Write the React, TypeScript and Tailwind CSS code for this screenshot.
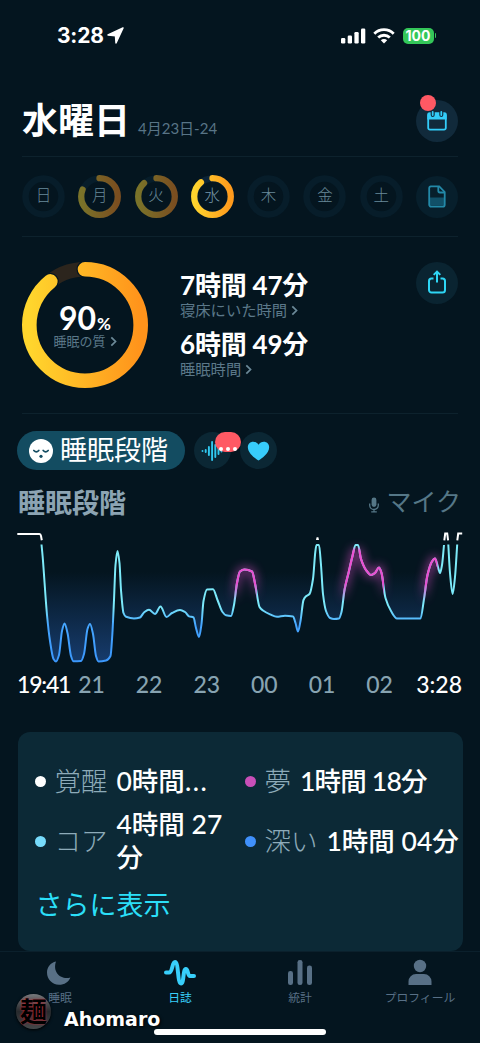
import type { ReactNode } from 'react';
import clsx from 'clsx';

type Point = [number, number];

const DAYS: { label: string; score: number; active?: boolean }[] = [
  { label: '日', score: 0 },
  { label: '月', score: 0.82 },
  { label: '火', score: 0.89 },
  { label: '水', score: 0.9, active: true },
  { label: '木', score: 0 },
  { label: '金', score: 0 },
  { label: '土', score: 0 },
];

const HOURS = ['21', '22', '23', '00', '01', '02'];

const CURVE: Point[] = [
  [41.5, 544.5], [42.6, 556], [47, 615], [50, 641], [53.5, 659], [56, 661.5], [59, 655], [62, 631], [64.5, 623.5],
  [67.5, 633], [71, 656], [73.5, 661.3], [81, 661], [84, 654], [87.5, 629], [90, 624], [93, 634], [96, 656],
  [98.5, 661.5], [106, 660.5], [110.5, 656], [112.3, 635], [114, 600], [115.5, 565], [117.5, 551], [119.5, 563],
  [121, 590], [123.5, 613], [126, 616.8], [134, 618.5], [140, 617.5], [144, 612.5], [149, 609.8], [155, 614],
  [160.5, 606.5], [166.5, 617], [172, 613], [180, 610], [185, 612], [189, 616.3], [193.5, 617.5], [196, 628],
  [199, 637], [201.5, 624], [203.5, 601], [207, 589.5], [213, 589.2], [217.5, 600], [222.5, 612], [226, 615.3],
  [231, 616], [234, 605], [237, 583], [240, 571.5], [244.5, 569.5], [252, 571.5], [255.5, 586], [259.5, 607],
  [263, 610.5], [270, 614.3], [277, 616.8], [285, 615.7], [293, 616.5], [295.5, 623], [298, 631.5], [300.5, 621],
  [303.5, 600], [306, 596.3], [309.5, 594], [313, 579], [315.3, 552], [316.5, 545], [319, 545], [321, 565],
  [323, 594], [326, 611], [330, 618], [334, 619], [339, 618.5], [341.5, 612], [344.5, 590], [348.5, 573],
  [352.5, 556], [355.5, 545], [358, 545], [361, 559], [366, 570], [371, 575], [375, 573], [379, 567.5],
  [381.5, 573], [385.5, 598], [391, 611], [397, 618.5], [420.5, 618.5], [424, 599], [427.5, 575], [432, 561.5],
  [435, 558.5], [438, 567], [440, 573], [442, 565], [444, 545],
];

const TAIL: Point[] = [[448.3, 544.5], [450, 573], [452.6, 594], [455, 577], [457.2, 544.5]];

// Monotone cubic interpolation, keeps the peaks from overshooting
const smooth = (pts: Point[]) => {
  const slopes = pts.slice(1).map((p, i) => (p[1] - pts[i][1]) / (p[0] - pts[i][0]));
  const tangents = pts.map((_, i) => {
    if (i === 0) return slopes[0];
    if (i === pts.length - 1) return slopes[i - 1];
    const a = slopes[i - 1];
    const b = slopes[i];
    return a * b <= 0 ? 0 : (2 * a * b) / (a + b);
  });
  return pts.slice(1).reduce((d, [x, y], i) => {
    const [px, py] = pts[i];
    const h = (x - px) / 3;
    return `${d} C${px + h} ${py + tangents[i] * h} ${x - h} ${y - tangents[i + 1] * h} ${x} ${y}`;
  }, `M${pts[0][0]} ${pts[0][1]}`);
};

const DayRing = ({ label, score, active }: { label: string; score: number; active?: boolean }) => {
  const length = 2 * Math.PI * 18;
  return (
    <div className="relative flex h-[43px] w-[43px] items-center justify-center">
      <svg viewBox="0 0 43 43" className="absolute inset-0">
        <defs>
          <linearGradient id={`day-${label}`} x1="0" y1="0" x2="0" y2="1">
            <stop offset="0" stopColor={active ? '#ffd52e' : '#7a7329'} />
            <stop offset="1" stopColor={active ? '#ff9a1c' : '#7a4e20'} />
          </linearGradient>
        </defs>
        <circle cx="21.5" cy="21.5" r="18" fill="none" stroke={active ? '#0b2438' : '#071d2a'} strokeWidth="6.5" />
        {score > 0 && (
          <circle
            cx="21.5"
            cy="21.5"
            r="18.3"
            fill="none"
            stroke={`url(#day-${label})`}
            strokeWidth="6.3"
            strokeLinecap="round"
            strokeDasharray={`${length * score} 200`}
            transform="rotate(-90 21.5 21.5)"
          />
        )}
      </svg>
      <span className={clsx('relative -top-px text-[15.5px] leading-none font-light', active ? 'text-[#7698aa]' : 'text-[#6a8a9a]')}>
        {label}
      </span>
    </div>
  );
};

const Chevron = ({ className }: { className?: string }) => (
  <svg viewBox="0 0 8 12" fill="none" stroke="#6b8998" strokeWidth="2" className={clsx('h-[11px] w-[7px]', className)}>
    <path d="M1.5 1.2 6.3 6l-4.8 4.8" />
  </svg>
);

const Duration = ({ value, label }: { value: string; label: string }) => (
  <div className="h-[59px]">
    <p className="text-[26px] leading-[30px] font-bold tracking-[-0.2px] whitespace-nowrap text-white">{value}</p>
    <p className="flex items-center text-[15.3px] leading-5 text-[#5b7889]">
      {label}
      <Chevron className="ml-1" />
    </p>
  </div>
);

const QualityRing = () => (
  <div className="relative h-[126px] w-[126px]">
    <svg viewBox="0 0 126 126" className="absolute inset-0">
      <defs>
        <linearGradient id="quality" x1="0" y1="0" x2="0" y2="1">
          <stop offset="0" stopColor="#ffd62d" />
          <stop offset="1" stopColor="#ff931b" />
        </linearGradient>
      </defs>
      <circle cx="63" cy="63" r="55.7" fill="none" stroke="#2c251d" strokeWidth="14.6" />
      <g fill="none" strokeLinecap="round" transform="rotate(-90 63 63)">
        <circle cx="63" cy="63" r="55.7" stroke="#04151f" strokeWidth="17" strokeDasharray="312 400" />
        <circle cx="63" cy="63" r="55.7" stroke="url(#quality)" strokeWidth="14.6" strokeDasharray="312 400" />
      </g>
    </svg>
    <div className="relative flex h-full flex-col items-center pt-[41px]">
      <p className="flex items-baseline font-bold text-white">
        <span className="text-[32px] leading-[30px]">90</span>
        <span className="ml-px text-[17px] leading-none">%</span>
      </p>
      <p className="flex items-center text-[13px] leading-4 text-[#5b7889]">
        睡眠の質
        <Chevron className="ml-1" />
      </p>
    </div>
  </div>
);

const SleepChart = () => {
  const line = smooth(CURVE);
  const tail = smooth(TAIL);
  return (
    <svg viewBox="0 522 480 146" className="block h-[146px] w-[480px] shrink-0" fill="none">
      <defs>
        <linearGradient id="depth" gradientUnits="userSpaceOnUse" x1="0" y1="545" x2="0" y2="662">
          <stop offset="0" stopColor="#7deaf8" />
          <stop offset="0.53" stopColor="#7be9fa" />
          <stop offset="0.68" stopColor="#45a5ff" />
          <stop offset="1" stopColor="#3b97fb" />
        </linearGradient>
        <linearGradient id="dream" gradientUnits="userSpaceOnUse" x1="0" y1="545" x2="0" y2="602">
          <stop offset="0.03" stopColor="#f04fd2" stopOpacity="0" />
          <stop offset="0.1" stopColor="#f04fd2" />
          <stop offset="0.68" stopColor="#e84fd0" />
          <stop offset="1" stopColor="#e84fd0" stopOpacity="0" />
        </linearGradient>
        <linearGradient id="haze" gradientUnits="userSpaceOnUse" x1="0" y1="572" x2="0" y2="662">
          <stop offset="0" stopColor="#1b4580" stopOpacity="0" />
          <stop offset="1" stopColor="#1b4580" stopOpacity="0.8" />
        </linearGradient>
        <filter id="glow" filterUnits="userSpaceOnUse" x="0" y="522" width="480" height="146">
          <feGaussianBlur stdDeviation="5" />
        </filter>
        <clipPath id="dreaming">
          <path d="M228 522h29v146h-29zM341 522h43v146h-43zM422 522h15.5v146H422z" />
        </clipPath>
      </defs>
      <path d={`${line} Z`} fill="url(#haze)" />
      <g filter="url(#glow)" opacity="0.55">
        <path d={line} stroke="url(#dream)" strokeWidth="6" clipPath="url(#dreaming)" />
      </g>
      <path d={line} stroke="url(#depth)" strokeWidth="2" strokeLinejoin="round" />
      <path d={tail} stroke="url(#depth)" strokeWidth="2" />
      <path d={line} stroke="url(#dream)" strokeWidth="2.2" clipPath="url(#dreaming)" />
      <g stroke="#fff" strokeWidth="2">
        <path d="M17.3 534H39.5Q40.6 534 41 536l.8 4.3" />
        <path d="m444.3 540.3.9-6.8h2l.9 6.8M457.3 540.3l.9-6.8h4" />
      </g>
      <path d="M316 540l.6-2.8h1.800l.6 2.8z" fill="#fff" />
    </svg>
  );
};

const Stage = ({ color, name, children }: { color: string; name: string; children: ReactNode }) => (
  <div className="flex h-[60px] items-center text-[26.5px] leading-[33px]">
    <span className={clsx('mr-[9px] h-[11px] w-[11px] shrink-0 rounded-full', color)} />
    <span className="shrink-0 font-light text-[#8dabb9]">{name}</span>
    <span className="ml-[9px] font-medium text-white">{children}</span>
  </div>
);

const Tab = ({ label, active, children }: { label: string; active?: boolean; children: ReactNode }) => (
  <div className={clsx('flex w-[120px] flex-col items-center pt-[7px]', active ? 'text-[#38cffb]' : 'text-[#587086]')}>
    <svg viewBox="0 0 32 28" className="h-7 w-8" fill="currentColor">{children}</svg>
    <span className="mt-[3px] text-[11.800px] leading-4">{label}</span>
  </div>
);

const Separator = () => <div className="mx-[22px] h-px shrink-0 bg-[#0d222d]" />;

export default function App() {
  return (
    <div className="relative flex h-[1043px] w-[480px] flex-col overflow-hidden bg-[#04151f] font-['Lato','Noto_Sans_CJK_JP',sans-serif]">
      <div className="flex h-[71px] shrink-0 items-center justify-between pr-[44px] pl-[57px] font-['Inter',sans-serif] text-white">
        <div className="flex items-center gap-[3px]">
          <span className="text-[21px] leading-none font-bold tracking-[-0.2px]">3:28</span>
          <svg viewBox="0 0 17 17" className="h-[17px] w-[17px]">
            <path d="M16 1 1 8l7.500.8L9 16Z" fill="#fff" stroke="#fff" strokeWidth="1.500" strokeLinejoin="round" />
          </svg>
        </div>
        <div className="flex items-center">
          <svg viewBox="0 0 25 16" className="h-4 w-[25px]" fill="#fff">
            <rect x="0" y="10" width="4.3" height="5.5" rx="1.2" />
            <rect x="6.7" y="7.5" width="4.3" height="8" rx="1.2" />
            <rect x="13.4" y="4" width="4.3" height="11.5" rx="1.2" />
            <rect x="20" y="0.5" width="4.3" height="15" rx="1.2" />
          </svg>
          <svg viewBox="0 0 22 16" className="ml-[7px] h-4 w-[22px]" fill="none" stroke="#fff" strokeWidth="2.8">
            <path d="M1.3 5.7a13.8 13.8 0 0 1 19.4 0M5.2 9.6a8.3 8.3 0 0 1 11.6 0" />
            <path d="M11 15.5 7.8 12.3a4.6 4.6 0 0 1 6.4 0Z" fill="#fff" stroke="none" />
          </svg>
          <div className="ml-[8px] flex h-4 w-[31px] items-center justify-center rounded-[5px] bg-[#34c759] text-[14px] leading-none font-bold">100</div>
          <div className="ml-px h-[5px] w-[1.5px] rounded-r bg-[#34c759]" />
        </div>
      </div>

      <header className="flex h-[85px] shrink-0 items-start justify-between pr-[22px] pl-[22px]">
        <div className="flex items-baseline pt-[28px]">
          <h1 className="text-[36px] leading-[42px] font-bold text-white">水曜日</h1>
          <span className="ml-2 text-[15px] text-[#587486]">4月23日-24</span>
        </div>
        <div className="relative mt-[29px] flex h-[42px] w-[42px] items-center justify-center rounded-full bg-[#112a3b]">
          <svg viewBox="0 0 20 20" className="h-5 w-5 overflow-visible" fill="none">
            <path d="M1.2 4.5h17.6V17a1.7 1.7 0 0 1-1.7 1.7H2.9A1.7 1.7 0 0 1 1.2 17Z" stroke="#33cdf9" strokeWidth="1.8" />
            <path d="M.3 3.500C.3 2 1.2 1.3 2.8 1.3h14.4c1.6 0 2.5.7 2.5 2.2v5H.3Z" fill="#33cdf9" />
            <path d="M5.700 1v3M14.300 1v3" stroke="#112a3b" strokeWidth="4" strokeLinecap="round" />
            <path d="M5.700 1v3M14.300 1v3" stroke="#33cdf9" strokeWidth="1.8" strokeLinecap="round" />
          </svg>
          <span className="absolute -top-[5px] left-1 h-4 w-4 rounded-full bg-[#ff5964]" />
        </div>
      </header>
      <Separator />

      <div className="flex h-[79px] shrink-0 items-center justify-between pr-[22px] pl-[22px]">
        {DAYS.map((day) => (
          <DayRing key={day.label} {...day} />
        ))}
        <div className="flex h-[42px] w-[42px] items-center justify-center rounded-full bg-[#071f2c]">
          <svg viewBox="0 0 18 23" className="h-[23px] w-[18px]" fill="none" stroke="#2389a8" strokeWidth="1.8">
            <path d="M1.5 12.500h15v8h-15z" fill="#115068" stroke="none" />
            <path d="M3 1.3h8.2L16.7 7v12.7a2 2 0 0 1-2 2H3.2a2 2 0 0 1-2-2V3.3a2 2 0 0 1 1.8-2Z" />
            <path d="M10.3 1.5v4.3q0 1.7 1.7 1.7h4.5" />
          </svg>
        </div>
      </div>
      <Separator />

      <section className="flex h-[176px] shrink-0 pt-[25px] pr-[22px] pl-[22px]">
        <QualityRing />
        <div className="mt-[8px] ml-8">
          <Duration value="7時間 47分" label="寝床にいた時間" />
          <Duration value="6時間 49分" label="睡眠時間" />
        </div>
        <div className="ml-auto flex h-[42px] w-[42px] items-center justify-center rounded-full bg-[#0a2431]">
          <svg viewBox="0 0 18 24" className="mb-[3px] h-6 w-[18px]" fill="none" stroke="#2ed6f5" strokeWidth="2">
            <path d="M5.5 8.5h-2A2.500 2.500 0 0 0 1 11v9a2.500 2.500 0 0 0 2.500 2.500h11A2.500 2.500 0 0 0 17 20v-9a2.500 2.500 0 0 0-2.500-2.500h-2M9 2v10.500M5.700 4.900 9 1.600l3.300 3.300" />
          </svg>
        </div>
      </section>
      <Separator />

      <div className="mt-[17px] flex h-[39px] shrink-0 items-center pl-[17px]">
        <div className="flex h-[39px] w-[168px] items-center rounded-full bg-[#134c61] pl-3">
          <svg viewBox="0 0 24 24" className="h-6 w-6" fill="none" stroke="#134c61" strokeWidth="1.7" strokeLinecap="round">
            <circle cx="12" cy="12" r="12" fill="#fff" stroke="none" />
            <path d="M4.8 11.5q2.6 2.8 5 0M14.2 11.5q2.4 2.8 5 0" />
            <circle cx="12" cy="17.3" r="1.6" fill="#134c61" stroke="none" />
          </svg>
          <span className="mb-[3px] ml-[7px] text-[27px] leading-none text-white">睡眠段階</span>
        </div>
        <div className="relative ml-[9px] flex h-[37px] w-[37px] items-center justify-center rounded-full bg-[#0b2734]">
          <svg viewBox="0 0 22 20" className="mr-0.5 h-5 w-[22px]" stroke="#30c8f0" strokeWidth="1.9" strokeLinecap="round">
            <path d="M1.5 10v.1M4.7 9v2M7.9 6v8M11.1 1v18M14.3 4v12M17.5 7v6M20.5 9.5v1" />
          </svg>
          <div className="absolute top-0 left-[21px] flex h-[20px] w-[26px] items-end justify-center gap-[3px] rounded-full bg-[#ff5964] pb-px">
            <span className="h-1 w-1 shrink-0 rounded-full bg-white" />
            <span className="h-1 w-1 shrink-0 rounded-full bg-white" />
            <span className="h-1 w-1 shrink-0 rounded-full bg-white" />
          </div>
        </div>
        <div className="ml-[9px] flex h-[37px] w-[37px] items-center justify-center rounded-full bg-[#0b2734]">
          <svg viewBox="0 0 24 21" className="h-[20px] w-[23px]" fill="#37ccfb">
            <path d="M12 20.5C9 18.5.8 13 .8 6.5.8 3 3.300.7 6.400.7c2.300 0 4.400 1.200 5.600 3.200C13.200 1.900 15.300.7 17.600.7c3.100 0 5.600 2.300 5.600 5.800 0 6.500-8.200 12-11.200 14Z" />
          </svg>
        </div>
      </div>

      <div className="mt-[13px] flex h-[39px] shrink-0 items-center justify-between pr-[19px] pl-[18px]">
        <h2 className="text-[27px] leading-none font-bold text-[#8ca4b3]">睡眠段階</h2>
        <div className="flex items-center text-[25px] leading-none text-[#557787]">
          <svg viewBox="0 0 10 16" className="mt-1 mr-[7px] h-4 w-[10px]" fill="none" stroke="currentColor" strokeWidth="1.3">
            <rect x="2.6" y="0.5" width="4.8" height="9.5" rx="2.4" fill="currentColor" stroke="none" />
            <path d="M.7 6.5v1.7a4.3 4.3 0 0 0 8.6 0V6.5M5 12.5v2.3M2.2 14.8h5.6" />
          </svg>
          <span className="mb-0.5">マイク</span>
        </div>
      </div>

      <SleepChart />

      <div className="flex h-[33px] shrink-0 items-center justify-between pr-[18px] pl-[17px] text-[23px] leading-none font-medium">
        <span className="w-[53px] tracking-[-1.2px] text-white">19:41</span>
        <div className="flex flex-1 justify-between pr-[23px] pl-[8px] text-[#87a3b1]">
          {HOURS.map((hour) => (
            <span key={hour} className="w-[27px] text-center">{hour}</span>
          ))}
        </div>
        <span className="text-white">3:28</span>
      </div>

      <section className="mx-[17.5px] mt-[31px] flex h-[219px] shrink-0 flex-col rounded-xl bg-[#0c2936] pt-[19px] pl-[17px]">
        <div className="grid grid-cols-[210px_1fr]">
          <Stage color="bg-white" name="覚醒">
            0時間<span className="tracking-[1.5px]">...</span>
          </Stage>
          <Stage color="bg-[#c94fb8]" name="夢">
            <span className="tracking-[-0.8px] whitespace-nowrap">1時間 18分</span>
          </Stage>
          <Stage color="bg-[#77dbfb]" name="コア">4時間 27<br />分</Stage>
          <Stage color="bg-[#4090fb]" name="深い">
            <span className="whitespace-nowrap">1時間 04分</span>
          </Stage>
        </div>
        <button className="mt-[14px] ml-px self-start text-[27px] leading-[40px] text-[#2bdff8]">さらに表示</button>
      </section>

      <nav className="flex h-[91px] shrink-0 border-t border-[#0b202c]">
        <Tab label="睡眠">
          <path d="M12 2.5C6.500 3.500 3 8.200 3 13.500 3 20 8 25.800 15 25.800c5.500 0 9.800-3 11.400-7.400C18 21.300 8 14 12 2.500Z" />
        </Tab>
        <Tab label="日誌" active>
          <path
            d="M2 13.500h3c3.600 0 3-10.500 6-10.500 3.800 0 2.300 21.500 6 21.500 3.200 0 1.800-14.500 4.800-14.500 2.600 0 1.600 7 4.200 7h4"
            fill="none"
            stroke="currentColor"
            strokeWidth="4"
            strokeLinecap="round"
          />
        </Tab>
        <Tab label="統計">
          <rect x="4" y="12" width="5" height="14" rx="2.3" />
          <rect x="13.5" y="1" width="5" height="25" rx="2.3" />
          <rect x="23" y="6.5" width="5" height="19.5" rx="2.3" />
        </Tab>
        <Tab label="プロフィール">
          <circle cx="16" cy="7" r="6.2" />
          <path d="M4.500 26v-3.500a7.500 7.500 0 0 1 7.500-7.500h8a7.500 7.500 0 0 1 7.500 7.500V26Z" />
        </Tab>
      </nav>

      <div className="absolute bottom-[8px] left-[154px] h-[6px] w-[172px] rounded-full bg-white" />

      <div className="absolute bottom-[14px] left-4 flex items-center">
        <div className="relative h-[35px] w-[35px] overflow-hidden rounded-full bg-linear-to-b from-[#77797c] via-[#272a2d] to-[#45484a] shadow-[0_1px_3px_#000]">
          <span className="absolute top-[3px] left-[4px] text-[27px] leading-[29px] font-bold text-black [text-shadow:0_0_2px_#d62635]">麺</span>
        </div>
        <span className="mt-[15px] ml-[13px] font-['DejaVu_Sans',sans-serif] text-[19px] leading-none font-bold text-white [text-shadow:1px_1px_3px_#000]">Ahomaro</span>
      </div>
    </div>
  );
}
